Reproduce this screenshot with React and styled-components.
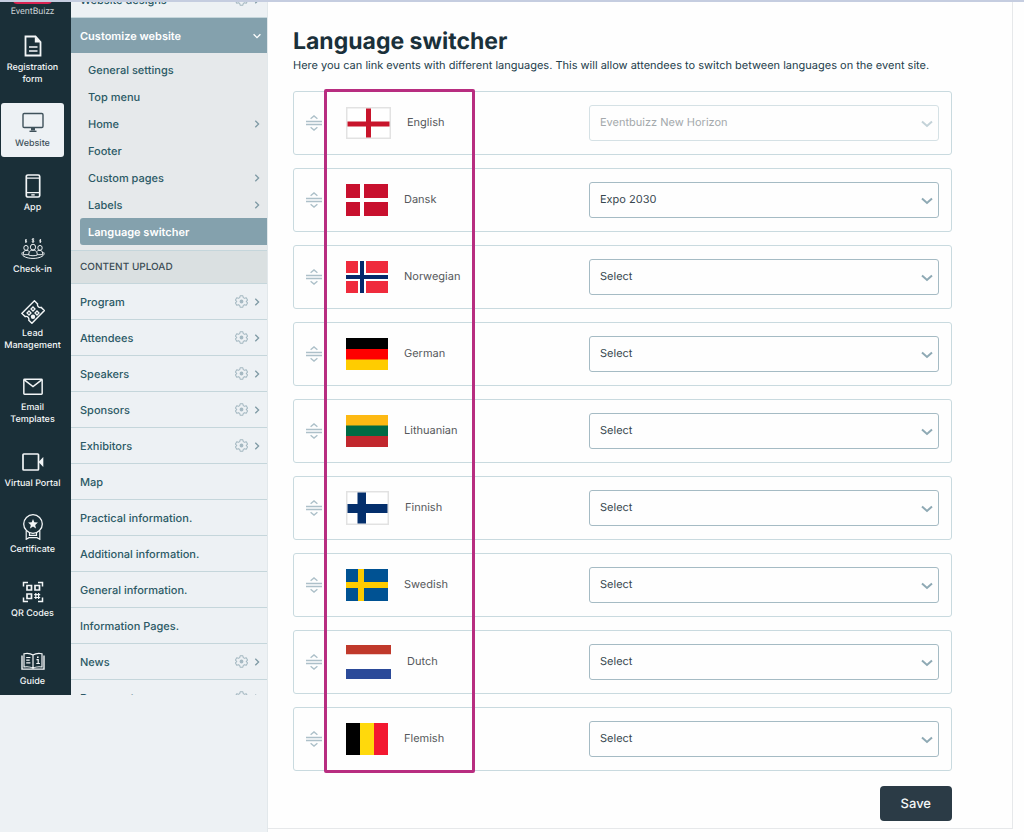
import { useState } from 'react';
import styled, { createGlobalStyle, css } from 'styled-components';

const railItems = [
	{ label: 'Registration form', icon: 'form' },
	{ label: 'Website', icon: 'screen', active: true },
	{ label: 'App', icon: 'phone' },
	{ label: 'Check-in', icon: 'people', size: 22 },
	{ label: 'Lead Management', icon: 'ticket' },
	{ label: 'Email Templates', icon: 'mail', size: 22 },
	{ label: 'Virtual Portal', icon: 'video' },
	{ label: 'Certificate', icon: 'badge', size: 26 },
	{ label: 'QR Codes', icon: 'qr' },
	{ label: 'Guide', icon: 'book', size: 22 },
];

const subItems = [
	{ label: 'General settings' },
	{ label: 'Top menu' },
	{ label: 'Home', more: true },
	{ label: 'Footer' },
	{ label: 'Custom pages', more: true },
	{ label: 'Labels', more: true },
	{ label: 'Language switcher', active: true },
];

const contentItems = [
	{ label: 'Program', settings: true },
	{ label: 'Attendees', settings: true },
	{ label: 'Speakers', settings: true },
	{ label: 'Sponsors', settings: true },
	{ label: 'Exhibitors', settings: true },
	{ label: 'Map' },
	{ label: 'Practical information.' },
	{ label: 'Additional information.' },
	{ label: 'General information.' },
	{ label: 'Information Pages.' },
	{ label: 'News', settings: true },
	{ label: 'Documents', settings: true },
];

const languages = [
	{ name: 'English', flag: 'en', event: 'Eventbuizz New Horizon', disabled: true },
	{ name: 'Dansk', flag: 'dk', event: 'Expo 2030' },
	{ name: 'Norwegian', flag: 'no' },
	{ name: 'German', flag: 'de' },
	{ name: 'Lithuanian', flag: 'lt' },
	{ name: 'Finnish', flag: 'fi' },
	{ name: 'Swedish', flag: 'se' },
	{ name: 'Dutch', flag: 'nl' },
	{ name: 'Flemish', flag: 'be' },
];

// every flag is drawn at its own size, some of them carry a grey frame
const flags = {
	en: {
		w: 45,
		h: 32,
		art: (
			<>
				<rect width="45" height="32" fill="#e2e2e2" />
				<rect x="1.5" y="1.5" width="42" height="29" fill="#fff" />
				<path d="M1.5 14.5h42v5h-42z M20 1.5h5v29h-5z" fill="#c8142b" />
			</>
		),
	},
	dk: {
		w: 42,
		h: 32,
		art: (
			<>
				<rect width="42" height="32" fill="#c8102e" />
				<path d="M0 14h42v4H0z M14 0h4v32h-4z" fill="#fff" />
			</>
		),
	},
	no: {
		w: 42,
		h: 32,
		art: (
			<>
				<rect width="42" height="32" fill="#ef2b3c" />
				<path d="M0 12h42v8H0z M12 0h8v32h-8z" fill="#fff" />
				<path d="M0 14h42v4H0z M14 0h4v32h-4z" fill="#06286b" />
			</>
		),
	},
	de: {
		w: 42,
		h: 32,
		art: (
			<>
				<rect width="42" height="11" fill="#000" />
				<rect y="11" width="42" height="11" fill="#fe0000" />
				<rect y="21.5" width="42" height="10.5" fill="#ffcc00" />
			</>
		),
	},
	lt: {
		w: 42,
		h: 32,
		art: (
			<>
				<rect width="42" height="11" fill="#fdb913" />
				<rect y="10.5" width="42" height="11" fill="#006a44" />
				<rect y="21" width="42" height="11" fill="#c1272d" />
			</>
		),
	},
	fi: {
		w: 43,
		h: 34,
		art: (
			<>
				<rect width="43" height="34" fill="#e2e2e2" />
				<rect x="1.5" y="1.5" width="40" height="31" fill="#fff" />
				<path d="M1.5 13h40v9h-40z M11.5 1.5H20v31h-8.5z" fill="#042f6c" />
			</>
		),
	},
	se: {
		w: 42,
		h: 32,
		art: (
			<>
				<rect width="42" height="32" fill="#005293" />
				<path d="M0 13h42v6H0z M12 0h6v32h-6z" fill="#fecb00" />
			</>
		),
	},
	nl: {
		w: 45,
		h: 34,
		art: (
			<>
				<rect width="45" height="9.5" fill="#c0392b" />
				<rect y="9.5" width="45" height="14.5" fill="#fff" />
				<rect y="24" width="45" height="10" fill="#2b4a99" />
			</>
		),
	},
	be: {
		w: 42,
		h: 32,
		art: (
			<>
				<rect width="14" height="32" fill="#000" />
				<rect x="14" width="14" height="32" fill="#ffd90c" />
				<rect x="28" width="14" height="32" fill="#f31830" />
			</>
		),
	},
};

const Flag = ({ code }) => {
	const { w, h, art } = flags[code];
	return (
		<svg width={w} height={h} viewBox={`0 0 ${w} ${h}`} aria-hidden="true">
			{art}
		</svg>
	);
};

const icons = {
	form: (
		<>
			<path d="M4.500 2.500h10l5 5.500v13.500h-15z" strokeWidth="1.800" />
			<path d="M13.800 2.500V8.500h6z" fill="currentColor" stroke="none" />
			<path d="M8 13h8.500M8 17h8.500" strokeWidth="1.500" />
		</>
	),
	screen: (
		<>
			<rect x="2" y="3.500" width="20" height="14" rx="1.200" strokeWidth="1.400" />
			<path d="M12 18v2.500" strokeWidth="4" />
			<path d="M8.500 21.300h7" strokeWidth="1.400" />
		</>
	),
	phone: (
		<>
			<rect x="5.300" y="1" width="13.400" height="22" rx="1.600" strokeWidth="1.700" />
			<path d="M5.300 4.200h13.400M5.300 18.700h13.400" strokeWidth="1.300" />
			<path d="M10.300 20.900h3.400" strokeWidth="1.400" />
		</>
	),
	people: (
		<g strokeWidth="1">
			<path d="M13.200 1.200c-2-.9-2.800.9-1.100 1.400s.9 2.400-1.300 1.300M12 .2v5.200" />
			<path d="M5.700 2c-1.500-.4-1.800.8-.6 1.200s.6 1.600-1 1M4.900 1.300v4M20.100 2c-1.500-.4-1.800.8-.6 1.200s.6 1.600-1 1M19.300 1.300v4" />
			<ellipse cx="12" cy="10" rx="2.600" ry="3.200" />
			<path d="M7.700 18.600c0-3.600 1.200-4.700 3-5.200h2.600c1.800.5 3 1.600 3 5.200-2.700 1-5.900 1-8.600 0z" />
			<ellipse cx="5" cy="10.800" rx="2.200" ry="2.700" />
			<ellipse cx="19" cy="10.800" rx="2.200" ry="2.700" />
			<path d="M7.400 18.200H2.300c0-2.700.5-4 2-4.700h1.900l1.600.8M16.600 18.200h5.100c0-2.700-.5-4-2-4.700h-1.900l-1.600.8" />
			<path d="M1.400 15.500c-2.200 3.500 3.600 6.800 10.600 6.800s12.800-3.300 10.600-6.800" />
		</g>
	),
	ticket: (
		<>
			<path d="M13.400.8l3.200 3.100c-.7 2.200 1.400 4.200 3.600 3.500l3.200 3.200L10.900 23.300l-3.100-3.100c.7-2.300-1.400-4.400-3.600-3.600L.8 13.400z" strokeWidth="1.400" />
			<path d="M12 7l2 2-2 2-2-2zM16 11l2 2-2 2-2-2zM8 11l2 2-2 2-2-2z" strokeWidth="1.300" />
			<circle cx="12" cy="16.800" r="2.200" fill="currentColor" stroke="none" />
		</>
	),
	mail: (
		<>
			<rect x="2" y="3.500" width="20" height="16.500" rx=".8" strokeWidth="1.600" />
			<path d="M2.500 4.200l9.500 7.300 9.500-7.300" strokeWidth="1.600" />
		</>
	),
	video: (
		<>
			<rect x="2" y="4" width="15.500" height="16" rx=".8" strokeWidth="1.700" />
			<path d="M17.500 12l4.800-5v10z" fill="currentColor" stroke="none" />
		</>
	),
	badge: (
		<>
			<circle cx="12" cy="10" r="9.300" strokeWidth="1.300" />
			<path d="M12 5l1.300 3.300 3.600.3-2.700 2.300.8 3.500-3-1.900-3 1.900.8-3.500-2.700-2.300 3.600-.3z" fill="currentColor" stroke="none" />
			<path d="M5.200 17v8.300l2.800-1.600h8l2.800 1.600V17M8.500 18.800v2.500h7v-2.500" strokeWidth="1.200" />
		</>
	),
	qr: (
		<>
			<path d="M2.500 6.500V2.500H7M17 2.500h4.500v4M2.500 17.500v4H7M17 21.500h4.500v-4" strokeWidth="1.500" />
			<path d="M6 5.500h4.500V10H6zM14 5.500h4.500V10H14zM6 14h4.500v4.500H6z" strokeWidth="1.700" />
			<path d="M14.800 13v6M17.600 13v6M13.200 14.700h6M13.200 17.500h6" strokeWidth="1.200" />
		</>
	),
	book: (
		<>
			<path d="M12 5.500C9.500 3.600 6 3.400 3 4v14.500c3.200-.5 6.500-.3 9 1.500 2.500-1.800 5.800-2 9-1.500V4c-3-.6-6.500-.4-9 1.500zM12 5.500V20" strokeWidth="1.200" />
			<path d="M1 6v14.800h22V6" strokeWidth="1.400" />
			<path d="M5.200 8.200h4.200M5.200 11h3.500M5.200 14h4.200M15.500 10.500h1.700v4.200M15.300 14.700h3.600" strokeWidth="1.200" />
			<path d="M16.800 7v1.800" strokeWidth="1.600" />
		</>
	),
};

const RailIcon = ({ name, size = 24 }) => (
	<svg
		width={24}
		height={size}
		viewBox={`0 0 24 ${name === 'badge' ? 26 : 24}`}
		preserveAspectRatio={name === 'people' || name === 'book' ? 'none' : undefined}
		fill="none"
		stroke="currentColor"
		aria-hidden="true"
	>
		{icons[name]}
	</svg>
);

const Chevron = ({ down, size = 8 }) => (
	<svg width={size} height={size} viewBox="0 0 8 8" fill="none" stroke="currentColor" strokeWidth="1.3" aria-hidden="true">
		<path d={down ? 'M.6 2.300L4 5.700l3.400-3.400' : 'M2.300.8L5.600 4 2.300 7.200'} />
	</svg>
);

const Gear = () => (
	<svg width="13" height="13" viewBox="0 0 24 24" fill="none" stroke="currentColor" strokeWidth="1.900" strokeLinejoin="round" aria-hidden="true">
		<path d="M9.500 1.500h5l.8 3.400 2.200 1.300 3.300-1 2.300 4.100-2.400 2.700 2.400 2.700-2.300 4.100-3.300-1-2.200 1.300-.8 3.400h-5l-.8-3.400-2.200-1.300-3.300 1L.9 14.700 3.300 12 .9 9.300l2.300-4.100 3.300 1 2.200-1.300z" />
		<circle cx="12" cy="12" r="2.600" fill="currentColor" />
	</svg>
);

const MenuLink = ({ item }) => (
	<MenuRow>
		<a href="#menu">{item.label}</a>
		{item.settings && (
			<RowTools>
				<IconButton aria-label={`${item.label} settings`}>
					<Gear />
				</IconButton>
				<Chevron />
			</RowTools>
		)}
	</MenuRow>
);

const LanguageRow = ({ language }) => {
	const [event, setEvent] = useState(language.event || 'Select');
	const id = `event-${language.flag}`;

	return (
		<Row>
			<Language>
				<Handle aria-label={`Move ${language.name}`}>
					<svg width="16" height="16" viewBox="0 0 16 16" fill="none" stroke="#adc0c9" aria-hidden="true">
						<path d="M4.600 3.700L8 .9l3.400 2.800M4.600 12.300L8 15.100l3.400-2.800" strokeWidth="1.400" />
						<path d="M0 6.500h16M0 9.500h16" strokeWidth="1.300" />
					</svg>
				</Handle>
				<Flag code={language.flag} />
				<label htmlFor={id}>{language.name}</label>
			</Language>
			<SelectBox $disabled={language.disabled}>
				<select id={id} value={event} disabled={language.disabled} onChange={e => setEvent(e.target.value)}>
					<option>Select</option>
					{language.event && <option>{language.event}</option>}
				</select>
				<svg width="12" height="8" viewBox="0 0 12 8" fill="none" stroke="currentColor" strokeWidth="2" aria-hidden="true">
					<path d="M1 1.500l5 4.500 5-4.500" />
				</svg>
			</SelectBox>
		</Row>
	);
};

const App = () => (
	<>
		<GlobalStyle />
		<TopStrip />
		<Layout>
			<Sidebar>
				<SidebarView>
					<Rail>
						<Logo href="#home">
							<LogoMark />
							EventBuizz
						</Logo>
						{railItems.map(item => (
							<RailLink key={item.label} href="#section" $active={item.active}>
								<RailIcon name={item.icon} size={item.size} />
								<span>{item.label}</span>
							</RailLink>
						))}
					</Rail>
					<Menu>
						<MenuLink item={{ label: 'Website designs', settings: true }} />
						<MenuHeader>
							Customize website
							<Chevron down />
						</MenuHeader>
						<SubMenu>
							{subItems.map(item => (
								<SubLink key={item.label} href="#page" $active={item.active}>
									{item.label}
									{item.more && <Chevron />}
								</SubLink>
							))}
						</SubMenu>
						<MenuTitle>CONTENT UPLOAD</MenuTitle>
						{contentItems.map(item => (
							<MenuLink key={item.label} item={item} />
						))}
					</Menu>
				</SidebarView>
			</Sidebar>
			<Main>
				<Title>Language switcher</Title>
				<Intro>
					Here you can link events with different languages. This will allow attendees to switch between languages on the
					event site.
				</Intro>
				<List>
					{languages.map(language => (
						<LanguageRow key={language.flag} language={language} />
					))}
					<Highlight />
				</List>
				<SaveButton>Save</SaveButton>
			</Main>
		</Layout>
	</>
);

const GlobalStyle = createGlobalStyle`
	* {
		box-sizing: border-box;
	}

	body {
		margin: 0;
		background: #fefefe;
		color: #24404c;
		font-family: Inter, 'Liberation Sans', sans-serif;
		font-size: 11px;
		text-rendering: geometricPrecision;
	}

	a {
		color: inherit;
		text-decoration: none;
	}

	button,
	select {
		font: inherit;
		text-rendering: inherit;
	}

	svg {
		flex-shrink: 0;
	}
`;

const TopStrip = styled.div`
	height: 2px;
	background: #c5cde0;
`;

const Layout = styled.div`
	display: flex;
	align-items: stretch;
`;

const Sidebar = styled.aside`
	width: 268px;
	flex-shrink: 0;
	background: #edf1f4;
	border-right: 1px solid #e2e8eb;
`;

// visible part of the scrolled navigation
const SidebarView = styled.div`
	display: flex;
	height: calc(100vh - 147px);
	overflow: hidden;
`;

const Rail = styled.nav`
	width: 71px;
	flex-shrink: 0;
	padding-right: 6px;
	overflow: hidden;
	background: #1a2f38;
	color: #f3f6f7;
	font-size: 9px;
	font-weight: 500;
	line-height: 12px;
	text-align: center;
`;

const Logo = styled.a`
	display: flex;
	flex-direction: column;
	align-items: center;
	gap: 2px;
	margin-top: -22px;
	padding-bottom: 4px;
	color: #c9d1d5;
	font-family: Roboto, sans-serif;
	font-weight: 400;
`;

const LogoMark = styled.span`
	width: 39px;
	height: 24px;
	border-radius: 4px;
	background: #d92352;
`;

const RailLink = styled.a`
	display: flex;
	flex-direction: column;
	align-items: center;
	gap: 4px;
	padding: 12px 3px;

	&:last-child {
		padding-top: 18px;
	}

	${props =>
		props.$active &&
		css`
			margin: 5px 1px;
			padding: 7px 3px;
			border-radius: 3px;
			background: #edf1f4;
			color: #3f525b;
		`}
`;

const Menu = styled.nav`
	flex: 1;
	min-width: 0;
	margin-top: -20px;
	color: #2b5965;
	font-weight: 500;
`;

const MenuRow = styled.div`
	display: flex;
	align-items: center;
	justify-content: space-between;
	height: 36px;
	padding: 0 6px 0 9px;
	border-bottom: 1px solid #c5d6db;
`;

const RowTools = styled.div`
	display: flex;
	align-items: center;
	gap: 5px;
	color: #7f9aa5;
`;

const IconButton = styled.button`
	display: flex;
	padding: 0;
	border: 0;
	background: none;
	color: #a4b8c1;
`;

const MenuHeader = styled.button`
	display: flex;
	align-items: center;
	justify-content: space-between;
	width: 100%;
	height: 35px;
	padding: 0 6px 0 9px;
	border: 0;
	background: #84a1ad;
	color: #fff;
	font-weight: 600;
`;

const SubMenu = styled.div`
	padding: 3px 0 5px 9px;
	background: #e6e9eb;
`;

const SubLink = styled.a`
	display: flex;
	align-items: center;
	justify-content: space-between;
	height: 27px;
	padding: 0 6px 0 8px;

	svg {
		color: #7f9aa5;
	}

	${props =>
		props.$active &&
		css`
			border-radius: 3px 0 0 3px;
			background: #84a1ad;
			color: #fff;
			font-weight: 600;
		`}
`;

const MenuTitle = styled.div`
	display: flex;
	align-items: center;
	height: 34px;
	padding-left: 9px;
	border: 1px solid #c5d6db;
	border-width: 1px 0;
	background: #dae0e1;
	color: #3a4c54;
	font-size: 10px;
`;

const Main = styled.main`
	display: flex;
	flex: 1;
	flex-direction: column;
	min-width: 0;
	margin: 0 11px 3px 0;
	padding: 25px 60px 7px 25px;
	border: 1px solid #e6e8ea;
	border-width: 0 1px 1px 0;
`;

const Title = styled.h1`
	margin: 0;
	color: #1a303a;
	font-size: 23px;
	font-weight: 700;
	line-height: 28px;
`;

const Intro = styled.p`
	margin: 0 0 16px;
	line-height: 20px;
`;

const List = styled.div`
	position: relative;
	display: flex;
	flex-direction: column;
	gap: 13px;
`;

const Row = styled.div`
	display: grid;
	grid-template-columns: 283px 1fr;
	align-items: center;
	height: 64px;
	padding: 0 12px;
	border: 1px solid #c9dadf;
	border-radius: 3px;
`;

const Language = styled.div`
	display: flex;
	align-items: center;
	color: #56595c;

	label {
		padding: 0 0 3px 16px;
	}
`;

const Handle = styled.button`
	display: flex;
	margin-right: 24px;
	padding: 0;
	border: 0;
	background: none;
	cursor: grab;
`;

const SelectBox = styled.div`
	position: relative;
	color: ${props => (props.$disabled ? '#c3d2d8' : '#8ea9b4')};

	select {
		display: block;
		width: 100%;
		height: 36px;
		padding: 0 32px 3px 10px;
		appearance: none;
		border: 1px solid ${props => (props.$disabled ? '#d5e1e5' : '#a5bbc4')};
		border-radius: 3px;
		background: #fefefe;
		color: ${props => (props.$disabled ? '#a4a9ac' : '#37474f')};
		opacity: 1;
	}

	svg {
		position: absolute;
		top: 15px;
		right: 6px;
		pointer-events: none;
	}
`;

// frame drawn over the flag and name column
const Highlight = styled.div`
	position: absolute;
	top: -2px;
	bottom: -2px;
	left: 31px;
	width: 151px;
	border: 3px solid #b82d80;
	border-radius: 2px;
	pointer-events: none;
`;

const SaveButton = styled.button`
	align-self: flex-end;
	height: 35px;
	margin-top: 15px;
	padding: 0 21px;
	border: 0;
	border-radius: 4px;
	background: #2b3b46;
	color: #f3f6f7;
	font-size: 13px;
	font-weight: 500;
`;

export default App;
